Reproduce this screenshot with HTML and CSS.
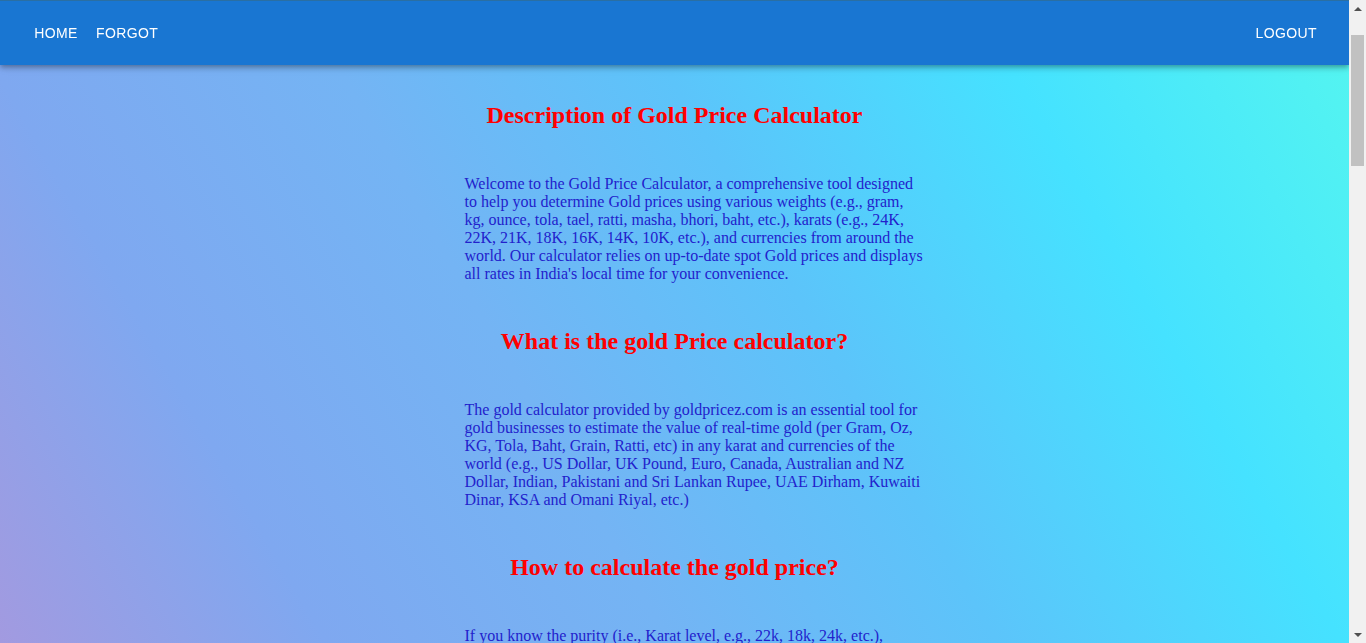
FILE: index.html
```html
<!DOCTYPE html>
<html lang="en">
<head>
<meta charset="utf-8">
<title>Gold Price Calculator</title>
<link rel="stylesheet" href="styles.css">
</head>
<body>
<header class="appbar">
  <nav class="toolbar">
    <a class="btn" href="#">Home</a>
    <a class="btn" href="#">Forgot</a>
    <span class="grow"></span>
    <a class="btn" href="#">Logout</a>
  </nav>
</header>
<main class="page">
  <div class="content">
    <h2 class="title">Description of Gold Price Calculator</h2>
    <p class="text">Welcome to the Gold Price Calculator, a comprehensive tool designed to help you determine Gold prices using various weights (e.g., gram, kg, ounce, tola, tael, ratti, masha, bhori, baht, etc.), karats (e.g., 24K, 22K, 21K, 18K, 16K, 14K, 10K, etc.), and currencies from around the world. Our calculator relies on up-to-date spot Gold prices and displays all rates in India's local time for your convenience.</p>

    <h2 class="title">What is the gold Price calculator?</h2>
    <p class="text">The gold calculator provided by goldpricez.com is an essential tool for gold businesses to estimate the value of real-time gold (per Gram, Oz, KG, Tola, Baht, Grain, Ratti, etc) in any karat and currencies of the world (e.g., US Dollar, UK Pound, Euro, Canada, Australian and NZ Dollar, Indian, Pakistani and Sri Lankan Rupee, UAE Dirham, Kuwaiti Dinar, KSA and Omani Riyal, etc.)</p>

    <h2 class="title">How to calculate the gold price?</h2>
    <p class="text">If you know the purity (i.e., Karat level, e.g., 22k, 18k, 24k, etc.), weight (e.g., gram, ounce, tola, etc.) and the current spot price of gold, you can easily calculate the value of your gold. First convert the weight of your gold into grams, then multiply it by the purity percentage of its karat, and finally multiply the result by the current price of one gram of pure gold.</p>
  </div>
</main>
<div class="scrollbar" aria-hidden="true">
  <span class="arrow up"></span>
  <span class="track"><span class="thumb"></span></span>
  <span class="arrow down"></span>
</div>
</body>
</html>
```
FILE: styles.css
```css
html {
  background: #f1f1f1;
}

body {
  margin: 0 17px 0 0;
  min-height: 643px;
  font-family: "Liberation Serif", "Times New Roman", serif;
  background: linear-gradient(60deg, #a29ae0 0%, #7fa8f0 19%, #74b4f4 39%, #5cc4fa 58%, #45e2ff 78%, #55f6ef 100%) fixed 0 0 / calc(100% - 17px) 100% no-repeat;
}

.appbar {
  position: fixed;
  top: 0;
  left: 0;
  right: 17px;
  z-index: 10;
  background: #1976d2;
  border-top: 1px solid #2a6fa3;
  color: #fff;
  box-shadow: 0 2px 4px -1px rgba(0, 0, 0, 0.2), 0 4px 5px 0 rgba(0, 0, 0, 0.14), 0 1px 10px 0 rgba(0, 0, 0, 0.12);
}

.toolbar {
  display: flex;
  align-items: center;
  min-height: 64px;
  padding: 0 24px;
}

.btn {
  box-sizing: border-box;
  min-width: 64px;
  padding: 6px 8px;
  font-family: "Liberation Sans", Arial, sans-serif;
  font-size: 14px;
  line-height: 24.5px;
  letter-spacing: 0.4px;
  text-transform: uppercase;
  text-align: center;
  color: inherit;
  text-decoration: none;
}

.grow {
  flex: 1;
}

.page {
  padding-top: 102px;
  padding-bottom: 40px;
}

.content {
  width: 500px;
  margin: 0 auto;
}

.title {
  margin: 0 0 46px;
  font-size: 24px;
  font-weight: bold;
  color: #ff0000;
  text-align: center;
}

.text {
  margin: 0 0 45px;
  padding-left: 40px;
  font-size: 16px;
  color: #2222cc;
}

.scrollbar {
  position: fixed;
  top: 0;
  right: 0;
  bottom: 0;
  z-index: 20;
  width: 17px;
  display: flex;
  flex-direction: column;
  background: #f1f1f1;
}

.arrow {
  height: 17px;
  display: flex;
  align-items: center;
  justify-content: center;
}

.arrow::before {
  content: "";
  width: 0;
  height: 0;
  border-left: 4px solid transparent;
  border-right: 4px solid transparent;
}

.arrow.up::before {
  border-bottom: 4px solid #505050;
}

.arrow.down::before {
  border-top: 4px solid #505050;
}

.track {
  flex: 1;
  padding: 18px 2px 0;
}

.thumb {
  display: block;
  height: 131px;
  background: #c1c1c1;
}
```
